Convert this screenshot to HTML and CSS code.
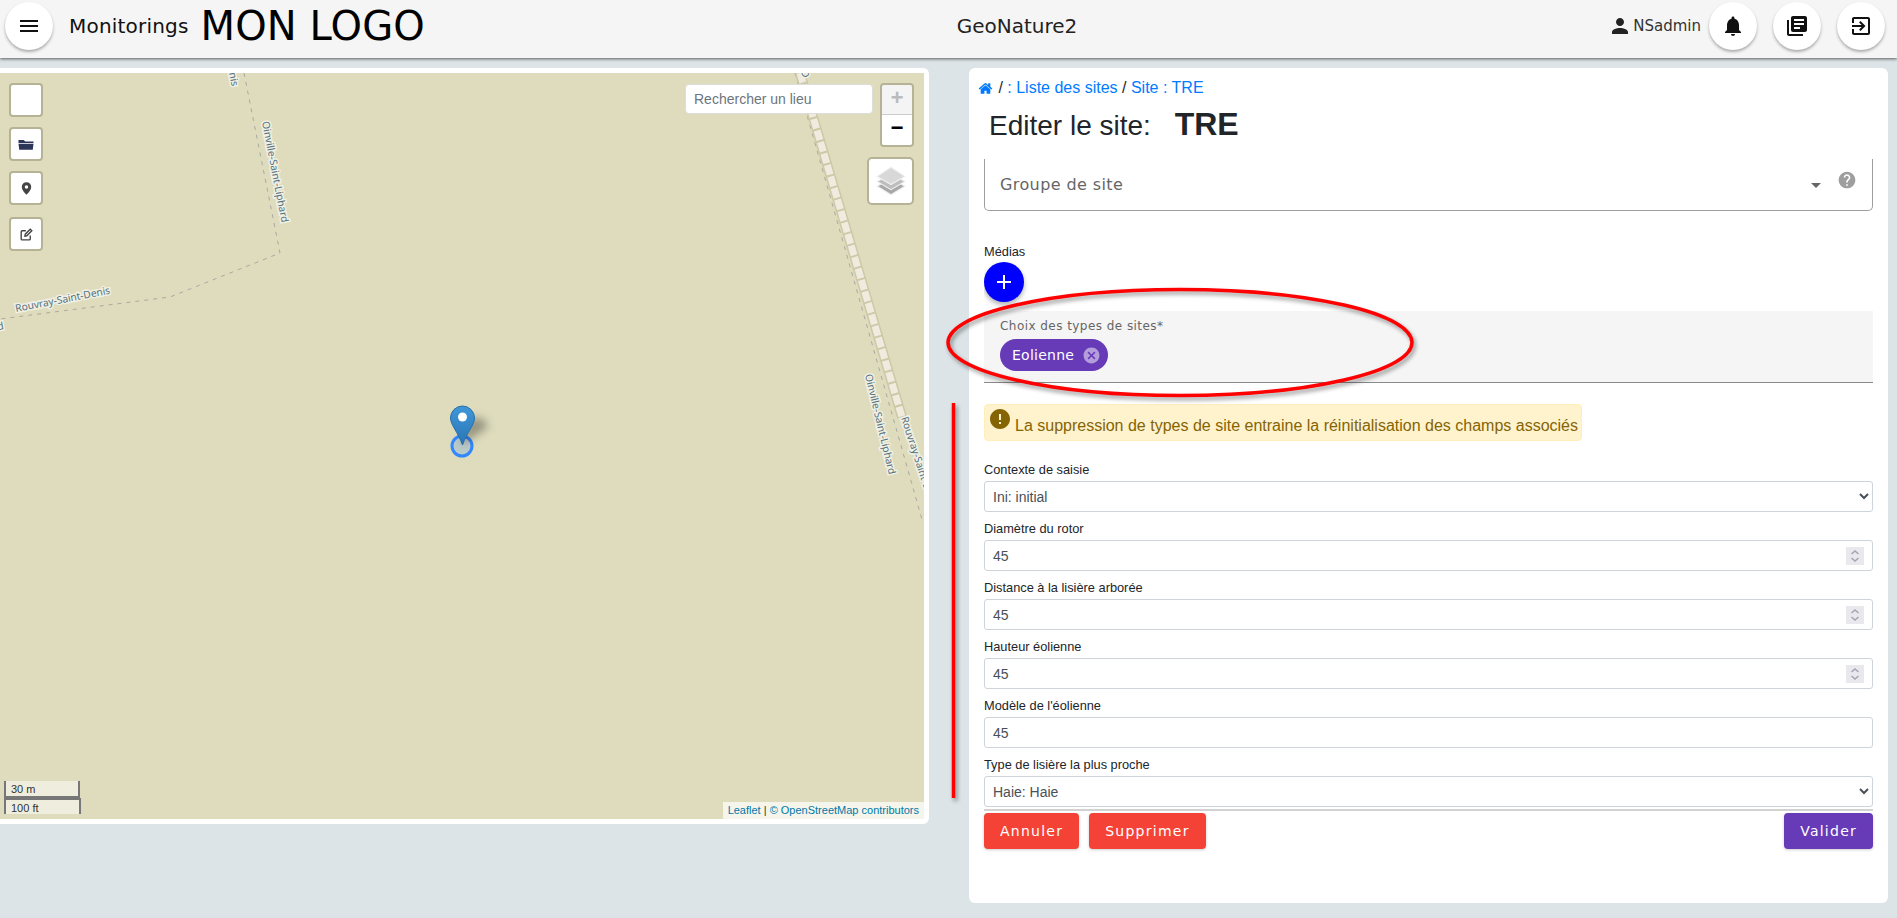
FILE: index.html
```html
<!DOCTYPE html>
<html lang="fr">
<head>
  <meta charset="UTF-8">
  <meta name="viewport" content="width=device-width, initial-scale=1.0">
  <title>GeoNature2</title>
  <link rel="stylesheet" href="styles.css">
</head>
<body>
  <header class="topbar">
    <div class="topbar-left">
      <button class="round-btn"><svg class="icon-24" viewBox="0 0 24 24"><path d="M3 18h18v-2H3v2zm0-5h18v-2H3v2zm0-7v2h18V6H3z"/></svg></button>
      <span class="app-name">Monitorings</span>
      <span class="app-logo">MON LOGO</span>
    </div>
    <div class="topbar-title">GeoNature2</div>
    <div class="topbar-right">
      <svg class="icon-user" viewBox="0 0 24 24"><path d="M12 12c2.21 0 4-1.79 4-4s-1.79-4-4-4-4 1.79-4 4 1.79 4 4 4zm0 2c-2.67 0-8 1.34-8 4v2h16v-2c0-2.66-5.33-4-8-4z"/></svg>
      <span class="user-name">NSadmin</span>
      <button class="round-btn"><svg class="icon-24" viewBox="0 0 24 24"><path d="M12 22c1.1 0 2-.9 2-2h-4c0 1.1.89 2 2 2zm6-6v-5c0-3.07-1.64-5.64-4.5-6.32V4c0-.83-.67-1.5-1.5-1.5s-1.5.67-1.5 1.5v.68C7.63 5.36 6 7.92 6 11v5l-2 2v1h16v-1l-2-2z"/></svg></button>
      <button class="round-btn"><svg class="icon-24" viewBox="0 0 24 24"><path d="M4 6H2v14c0 1.1.9 2 2 2h14v-2H4V6zm16-4H8c-1.1 0-2 .9-2 2v12c0 1.1.9 2 2 2h12c1.1 0 2-.9 2-2V4c0-1.1-.9-2-2-2zm-1 9H9V9h10v2zm-4 4H9v-2h6v2zm4-8H9V5h10v2z"/></svg></button>
      <button class="round-btn"><svg class="icon-24" viewBox="0 0 24 24"><path d="M10.09 15.59L11.5 17l5-5-5-5-1.41 1.41L12.67 11H3v2h9.67l-2.58 2.59zM19 3H5c-1.11 0-2 .9-2 2v4h2V5h14v14H5v-4H3v4c0 1.1.89 2 2 2h14c1.1 0 2-.9 2-2V5c0-1.1-.9-2-2-2z"/></svg></button>
    </div>
  </header>

  <main class="content">
    <section class="map-card">
      <div class="map">
        <svg class="map-bg" viewBox="0 0 924 746">
          <defs>
            <linearGradient id="pinGrad" x1="0" y1="0" x2="0" y2="1">
              <stop offset="0" stop-color="#3f97d8"/>
              <stop offset="1" stop-color="#2a76b6"/>
            </linearGradient>
          </defs>
          <path class="road-dash" d="M244 0L280 180L170 224L0 246"/>
          <path class="road-dash" d="M795 0L923 450"/>
          <path class="rail-edge" d="M800 0L902 344"/>
          <path class="rail-fill" d="M800 0L902 344"/>
          <text class="map-label" transform="translate(262 49) rotate(79)">Oinville-Saint-Liphard</text>
          <text class="map-label" transform="translate(16 239) rotate(-11)">Rouvray-Saint-Denis</text>
          <text class="map-label" transform="translate(229 0) rotate(79)">nis</text>
          <text class="map-label" transform="translate(-6 258) rotate(-11)">rd</text>
          <text class="map-label" transform="translate(801 -2) rotate(76)">D</text>
          <text class="map-label" transform="translate(865 302) rotate(76.500)">Oinville-Saint-Liphard</text>
          <text class="map-label" transform="translate(901 345) rotate(72)">Rouvray-Saint-Denis</text>
          <circle class="marker-ring" cx="462" cy="373" r="10"/>
          <path class="marker-shadow" d="M462 372L488 354Q484 342 472 345Q462 352 462 372z"/>
          <path class="marker-pin" d="M462.500 372C458 359 450.500 352 450.500 345A12 12 0 0 1 474.500 345C474.500 352 467 359 462.500 372z"/>
          <circle class="marker-dot" cx="462.500" cy="344" r="4.500"/>
        </svg>

        <div class="draw-tools">
          <button class="map-btn"></button>
          <button class="map-btn"><svg class="icon-tool" viewBox="0 0 24 24"><path class="folder" d="M2 6.500h7l2 2h11v2H2zM2 11.500h20l-1 8H3z"/></svg></button>
          <button class="map-btn"><svg class="icon-tool icon-tool-sm" viewBox="0 0 24 24"><path class="tool-dark" d="M12 2a7.500 7.500 0 0 0-7.500 7.500C4.500 15 12 22 12 22s7.500-7 7.500-12.500A7.500 7.500 0 0 0 12 2zm0 10.300a2.800 2.800 0 1 1 0-5.600 2.800 2.800 0 0 1 0 5.600z"/></svg></button>
          <button class="map-btn map-btn-last"><svg class="icon-tool icon-tool-sm" viewBox="0 0 24 24"><path class="tool-line" d="M18 13.500V19a1.500 1.500 0 0 1-1.500 1.500H5A1.500 1.500 0 0 1 3.500 19V7.500A1.500 1.500 0 0 1 5 6h6M9.500 14.500l.5-3 8-8 2.500 2.500-8 8z"/></svg></button>
        </div>

        <div class="map-top-right">
          <div class="map-search-row">
            <input class="map-search" type="text" placeholder="Rechercher un lieu">
            <div class="zoom-ctrl">
              <div class="zoom-in">+</div>
              <div class="zoom-out">−</div>
            </div>
          </div>
          <div class="layers-ctrl">
            <svg class="icon-layers" viewBox="0 0 26 26">
              <path class="layer-c" d="M13 10.500L25 17.500L13 25L1 17.500z"/>
              <path class="layer-b" d="M13 6.500L25 13.500L13 20.500L1 13.500z"/>
              <path class="layer-a" d="M13 1L25 9L13 16L1 9z"/>
            </svg>
          </div>
        </div>

        <div class="scale">
          <div class="scale-line">30 m</div>
          <div class="scale-line scale-line-ft">100 ft</div>
        </div>
        <div class="attribution"><a>Leaflet</a> | <a>©</a> <a>OpenStreetMap contributors</a></div>
      </div>
    </section>

    <section class="form-card">
      <div class="breadcrumb">
        <svg class="icon-home" viewBox="0 0 1792 1792"><path d="M1472 992v480q0 26-19 45t-45 19h-384v-384h-256v384h-384q-26 0-45-19t-19-45v-480q0-1 .5-3t.5-3l575-474 575 474q1 2 1 6zm223-69l-62 74q-8 9-21 11h-3q-13 0-21-7l-692-577-692 577q-12 8-24 7-13-2-21-11l-62-74q-8-10-7-23.5t11-21.5l719-599q32-26 76-26t76 26l244 204v-195q0-14 9-23t23-9h192q14 0 23 9t9 23v408l219 182q10 8 11 21.5t-7 23.5z"/></svg>
        <span class="crumb-sep">/</span> <a>: Liste des sites</a> <span class="crumb-sep">/</span> <a>Site : TRE</a>
      </div>
      <h3 class="page-title">Editer le site: <strong>TRE</strong></h3>

      <div class="form-scroll">
        <div class="group-field">
          <span class="group-label">Groupe de site</span>
          <span class="select-arrow"></span>
          <svg class="icon-help" viewBox="0 0 24 24"><path d="M12 2C6.48 2 2 6.48 2 12s4.48 10 10 10 10-4.48 10-10S17.52 2 12 2zm1 17h-2v-2h2v2zm2.070-7.750l-.9.920C13.450 12.900 13 13.500 13 15h-2v-.5c0-1.100.45-2.100 1.170-2.830l1.240-1.260c.37-.36.59-.86.59-1.410 0-1.100-.9-2-2-2s-2 .9-2 2H8c0-2.210 1.790-4 4-4s4 1.790 4 4c0 .88-.36 1.680-.93 2.250z"/></svg>
        </div>

        <label class="field-label medias-label">Médias</label>
        <button class="fab"><svg class="icon-24" viewBox="0 0 24 24"><path d="M19 13h-6v6h-2v-6H5v-2h6V5h2v6h6v2z"/></svg></button>

        <div class="chips-field">
          <div class="chips-label">Choix des types de sites*</div>
          <span class="chip">Eolienne
            <svg class="chip-close" viewBox="0 0 24 24"><path d="M12 2C6.470 2 2 6.470 2 12s4.470 10 10 10 10-4.470 10-10S17.530 2 12 2zm5 13.590L15.590 17 12 13.410 8.410 17 7 15.590 10.590 12 7 8.410 8.410 7 12 10.590 15.590 7 17 8.410 13.410 12 17 15.590z"/></svg>
          </span>
        </div>

        <div class="warning">
          <svg class="icon-warning" viewBox="0 0 24 24"><path d="M12 2C6.480 2 2 6.480 2 12s4.480 10 10 10 10-4.480 10-10S17.520 2 12 2zm1 15h-2v-2h2v2zm0-4h-2V7h2v6z"/></svg>
          <span>La suppression de types de site entraine la réinitialisation des champs associés</span>
        </div>

        <label class="field-label">Contexte de saisie</label>
        <select class="control"><option>Ini: initial</option></select>
        <label class="field-label">Diamètre du rotor</label>
        <input class="control" type="number" value="45">
        <label class="field-label">Distance à la lisière arborée</label>
        <input class="control" type="number" value="45">
        <label class="field-label">Hauteur éolienne</label>
        <input class="control" type="number" value="45">
        <label class="field-label">Modèle de l'éolienne</label>
        <input class="control" type="text" value="45">
        <label class="field-label">Type de lisière la plus proche</label>
        <select class="control"><option>Haie: Haie</option></select>
      </div>

      <div class="form-actions">
        <button class="action action-red">Annuler</button>
        <button class="action action-red">Supprimer</button>
        <button class="action action-purple">Valider</button>
      </div>
    </section>
  </main>

  <!-- annotations rouges par dessus la capture -->
  <svg class="annotations" viewBox="0 0 1897 918">
    <ellipse cx="1180" cy="342.500" rx="232" ry="53"/>
    <path d="M953.500 403V798"/>
  </svg>
</body>
</html>
```

FILE: styles.css
```css
* {
  box-sizing: border-box;
}

body {
  margin: 0;
  height: 918px;
  overflow: hidden;
  background-color: #dce4e7;
  font-family: "Liberation Sans", Arial, sans-serif;
  color: #212529;
}

button {
  font-family: inherit;
  padding: 0;
  border: none;
}

/* Barre du haut */
.topbar {
  height: 58px;
  display: flex;
  align-items: center;
  justify-content: space-between;
  padding: 0 12px 6px 5px;
  background-color: #f5f5f5;
  box-shadow: 0 1px 3px rgba(0, 0, 0, 0.6);
  font-family: "DejaVu Sans", sans-serif;
  position: relative;
}

.topbar-left,
.topbar-right {
  display: flex;
  align-items: center;
}

.topbar-left {
  width: 674px;
}

.topbar-right {
  width: 526px;
  justify-content: flex-end;
}

.round-btn {
  width: 48px;
  height: 48px;
  border-radius: 50%;
  background: white;
  display: flex;
  align-items: center;
  justify-content: center;
  box-shadow: 0 2px 3px rgba(0, 0, 0, 0.3);
}

.topbar-right .round-btn {
  margin-left: 16px;
}

.topbar-right .user-name + .round-btn {
  margin-left: 8px;
}

.icon-24 {
  width: 24px;
  height: 24px;
  fill: #111;
}

.app-name {
  font-size: 20px;
  margin-left: 16px;
  letter-spacing: 0.2px;
  color: #111;
}

.app-logo {
  font-size: 40px;
  line-height: 48px;
  margin-left: 12px;
  letter-spacing: 0.1px;
  color: black;
}

.topbar-title {
  font-size: 20px;
  color: #222;
  margin-left: -4px;
}

.icon-user {
  width: 24px;
  height: 24px;
  fill: #222;
}

.user-name {
  font-size: 15px;
  margin-left: 1px;
  color: #333;
}

/* Contenu */
.content {
  display: flex;
  align-items: flex-start;
  margin-top: 10px;
}

.map-card {
  width: 929px;
  height: 756px;
  padding: 5px 5px 5px 0;
  background: white;
  border-radius: 0 6px 6px 0;
}

.map {
  position: relative;
  height: 100%;
  overflow: hidden;
  background-color: #dedcbd;
}

.map-bg {
  position: absolute;
  top: 0;
  left: 0;
  width: 924px;
  height: 746px;
}

.road-dash {
  fill: none;
  stroke: #a9a9a3;
  stroke-width: 1;
  stroke-dasharray: 4 5;
}

.rail-edge {
  fill: none;
  stroke: #cdc8a6;
  stroke-width: 10;
}

.rail-fill {
  fill: none;
  stroke: #efebdf;
  stroke-width: 7;
  stroke-dasharray: 10 2;
}

.map-label {
  font-family: "Noto Sans", sans-serif;
  font-size: 10.2px;
  fill: #547280;
  stroke: #f1f0e4;
  stroke-width: 3px;
  paint-order: stroke;
}

.marker-ring {
  fill: rgba(51, 136, 255, 0.2);
  stroke: #3388ff;
  stroke-width: 3;
}

.marker-shadow {
  fill: rgba(0, 0, 0, 0.32);
  filter: blur(4px);
}

.marker-pin {
  fill: url(#pinGrad);
  stroke: #2a6ea6;
  stroke-width: 1;
}

.marker-dot {
  fill: white;
}

.draw-tools {
  position: absolute;
  top: 10px;
  left: 9px;
  display: flex;
  flex-direction: column;
  gap: 10px;
}

.map-btn {
  width: 34px;
  height: 34px;
  background: white;
  border: 2px solid #b5b296;
  border-radius: 4px;
  display: flex;
  align-items: center;
  justify-content: center;
}

.map-btn-last {
  margin-top: 2px;
}

.icon-tool {
  width: 18px;
  height: 18px;
}

.icon-tool-sm {
  width: 15px;
  height: 15px;
}

.folder {
  fill: #2a3558;
}

.tool-dark {
  fill: #444;
}

.tool-line {
  fill: none;
  stroke: #444;
  stroke-width: 2.200;
}

.map-top-right {
  position: absolute;
  top: 10px;
  left: 685px;
  width: 229px;
  display: flex;
  flex-direction: column;
  align-items: flex-end;
}

.map-search-row {
  display: flex;
  align-items: flex-start;
  gap: 7px;
}

.map-search {
  width: 188px;
  height: 30px;
  margin-top: 1px;
  padding: 0 8px;
  border: 1px solid #ddd;
  border-radius: 4px;
  background: white;
  font-family: inherit;
  font-size: 14px;
}

.map-search::placeholder {
  color: #6c757d;
}

.zoom-ctrl {
  width: 34px;
  height: 64px;
  border: 2px solid #b5b296;
  border-radius: 4px;
  overflow: hidden;
  font-family: "Lucida Console", "Liberation Mono", monospace;
  font-weight: bold;
  font-size: 22px;
  text-align: center;
}

.zoom-in {
  height: 30px;
  line-height: 30px;
  background: #f4f4f4;
  color: #bbb;
  border-bottom: 1px solid #ccc;
}

.zoom-out {
  height: 30px;
  line-height: 30px;
  background: white;
  color: black;
}

.layers-ctrl {
  width: 47px;
  height: 48px;
  margin-top: 10px;
  background: white;
  border: 2px solid #b5b296;
  border-radius: 5px;
  display: flex;
  align-items: center;
  justify-content: center;
}

.icon-layers {
  width: 30px;
  height: 30px;
}

.layer-a {
  fill: #d8d8d8;
  stroke: #f0f0f0;
}

.layer-b {
  fill: #bdbdbd;
  stroke: #efefef;
}

.layer-c {
  fill: #a8a8a8;
  stroke: #efefef;
}

.scale {
  position: absolute;
  left: 4px;
  bottom: 5px;
  font-size: 11px;
  color: #333;
}

.scale-line {
  width: 76px;
  height: 17px;
  padding-left: 5px;
  line-height: 17px;
  background: rgba(255, 255, 255, 0.5);
  border: 2px solid #777;
  border-top: none;
  white-space: nowrap;
}

.scale-line-ft {
  width: 77px;
  height: 16px;
  line-height: 16px;
  border-top: 2px solid #777;
  border-bottom: none;
}

.attribution {
  position: absolute;
  right: 0;
  bottom: 0;
  height: 17px;
  padding: 0 5px;
  line-height: 17px;
  font-size: 11px;
  color: #333;
  background: rgba(255, 255, 255, 0.7);
}

.attribution a {
  color: #0078a8;
}

/* Formulaire */
.form-card {
  width: 919px;
  height: 835px;
  margin-left: 40px;
  padding: 10px 15px 0;
  background: white;
  border-radius: 6px;
}

.breadcrumb {
  height: 20px;
  margin-left: -6px;
  font-size: 16px;
  line-height: 20px;
  display: flex;
  align-items: center;
  gap: 4.450px;
}

.breadcrumb a {
  color: #007bff;
}

.icon-home {
  width: 15px;
  height: 15px;
  margin-right: 1px;
  fill: #007bff;
}

.page-title {
  height: 61px;
  margin: 0 0 0 5px;
  padding-top: 8px;
  font-size: 28px;
  line-height: 36px;
  font-weight: 400;
  white-space: pre;
}

.page-title strong {
  margin-left: 16px;
  font-size: 32px;
  font-weight: bold;
}

.form-scroll {
  height: 652px;
  overflow: hidden;
  border-bottom: 2px solid #d2d2d2;
  display: flex;
  flex-direction: column;
  align-items: flex-start;
}

.group-field {
  width: 100%;
  height: 52px;
  flex-shrink: 0;
  border: 1px solid #9e9e9e;
  border-top: none;
  border-radius: 0 0 5px 5px;
  display: flex;
  align-items: center;
  padding: 0 15px 0 15px;
  font-family: "DejaVu Sans", sans-serif;
}

.group-label {
  flex: 1;
  font-size: 16px;
  letter-spacing: 0.4px;
  color: #666;
}

.select-arrow {
  width: 0;
  height: 0;
  margin-top: 1px;
  border-left: 5px solid transparent;
  border-right: 5px solid transparent;
  border-top: 5px solid #666;
}

.icon-help {
  width: 20px;
  height: 20px;
  margin: -9px 0 0 16px;
  fill: #9e9e9e;
}

.field-label {
  display: block;
  flex-shrink: 0;
  height: 18px;
  margin-bottom: 3px;
  font-size: 12.8px;
  line-height: 20px;
}

.medias-label {
  margin: 31px 0 2px;
}

.fab {
  width: 40px;
  height: 40px;
  flex-shrink: 0;
  border-radius: 50%;
  background: #0000ff;
  display: flex;
  align-items: center;
  justify-content: center;
  box-shadow: 0 3px 5px rgba(0, 0, 0, 0.3);
}

.fab .icon-24 {
  fill: white;
}

.chips-field {
  width: 100%;
  height: 72px;
  flex-shrink: 0;
  margin-top: 9px;
  padding: 7px 16px 0;
  background: #f5f5f5;
  border-bottom: 1px solid #8a8a8a;
  font-family: "DejaVu Sans", sans-serif;
}

.chips-label {
  height: 17px;
  margin-bottom: 4px;
  font-size: 12px;
  line-height: 17px;
  letter-spacing: 0.45px;
  color: #666;
}

.chip {
  display: inline-flex;
  align-items: center;
  height: 32px;
  padding: 0 7px 0 12px;
  border-radius: 16px;
  background: #673ab7;
  color: white;
  font-size: 14px;
  letter-spacing: 0.25px;
}

.chip-close {
  width: 19px;
  height: 19px;
  margin-left: 8px;
  fill: rgba(255, 255, 255, 0.5);
}

.warning {
  flex-shrink: 0;
  height: 37px;
  margin: 21px 0 19px;
  padding: 0 3px;
  display: flex;
  background: #fff3cd;
  border: 1px solid #ffeeba;
  border-radius: 4px;
  color: #856404;
  font-size: 16px;
  line-height: 36px;
}

.warning span {
  margin-top: 3px;
  margin-left: 3px;
}

.icon-warning {
  width: 24px;
  height: 24px;
  margin-top: 2px;
  fill: #856404;
}

.control {
  display: block;
  flex-shrink: 0;
  width: 100%;
  height: 31px;
  margin-bottom: 7px;
  padding: 4px 8px;
  border: 1px solid #ced4da;
  border-radius: 3px;
  background: white;
  color: #495057;
  font-family: inherit;
  font-size: 14px;
}

select.control {
  padding-left: 4px;
}

.control::-webkit-inner-spin-button {
  -webkit-appearance: none;
  opacity: 1;
  width: 18px;
  height: 18px;
  background: #e9e9ed url("data:image/svg+xml,%3Csvg xmlns='http://www.w3.org/2000/svg' width='18' height='18'%3E%3Cpath d='M5.500 7l3.500-3 3.500 3M5.500 11l3.500 3 3.500-3' fill='none' stroke='%23a3a3b3' stroke-width='1.500'/%3E%3C/svg%3E") no-repeat center;
}

.form-actions {
  display: flex;
  gap: 10px;
  margin-top: 2px;
}

.action {
  height: 36px;
  padding: 0 16px;
  border-radius: 4px;
  color: white;
  font-family: "DejaVu Sans", sans-serif;
  font-size: 14px;
  letter-spacing: 1.25px;
  box-shadow: 0 1px 3px rgba(0, 0, 0, 0.2);
}

.action-red {
  background: #f44336;
}

.action-purple {
  margin-left: auto;
  background: #673ab7;
}

.annotations {
  position: absolute;
  top: 0;
  left: 0;
  width: 1897px;
  height: 918px;
  pointer-events: none;
  fill: none;
  stroke: #ff0000;
  stroke-width: 3.500;
  filter: drop-shadow(2px 3px 2px rgba(0, 0, 0, 0.4));
}
```
